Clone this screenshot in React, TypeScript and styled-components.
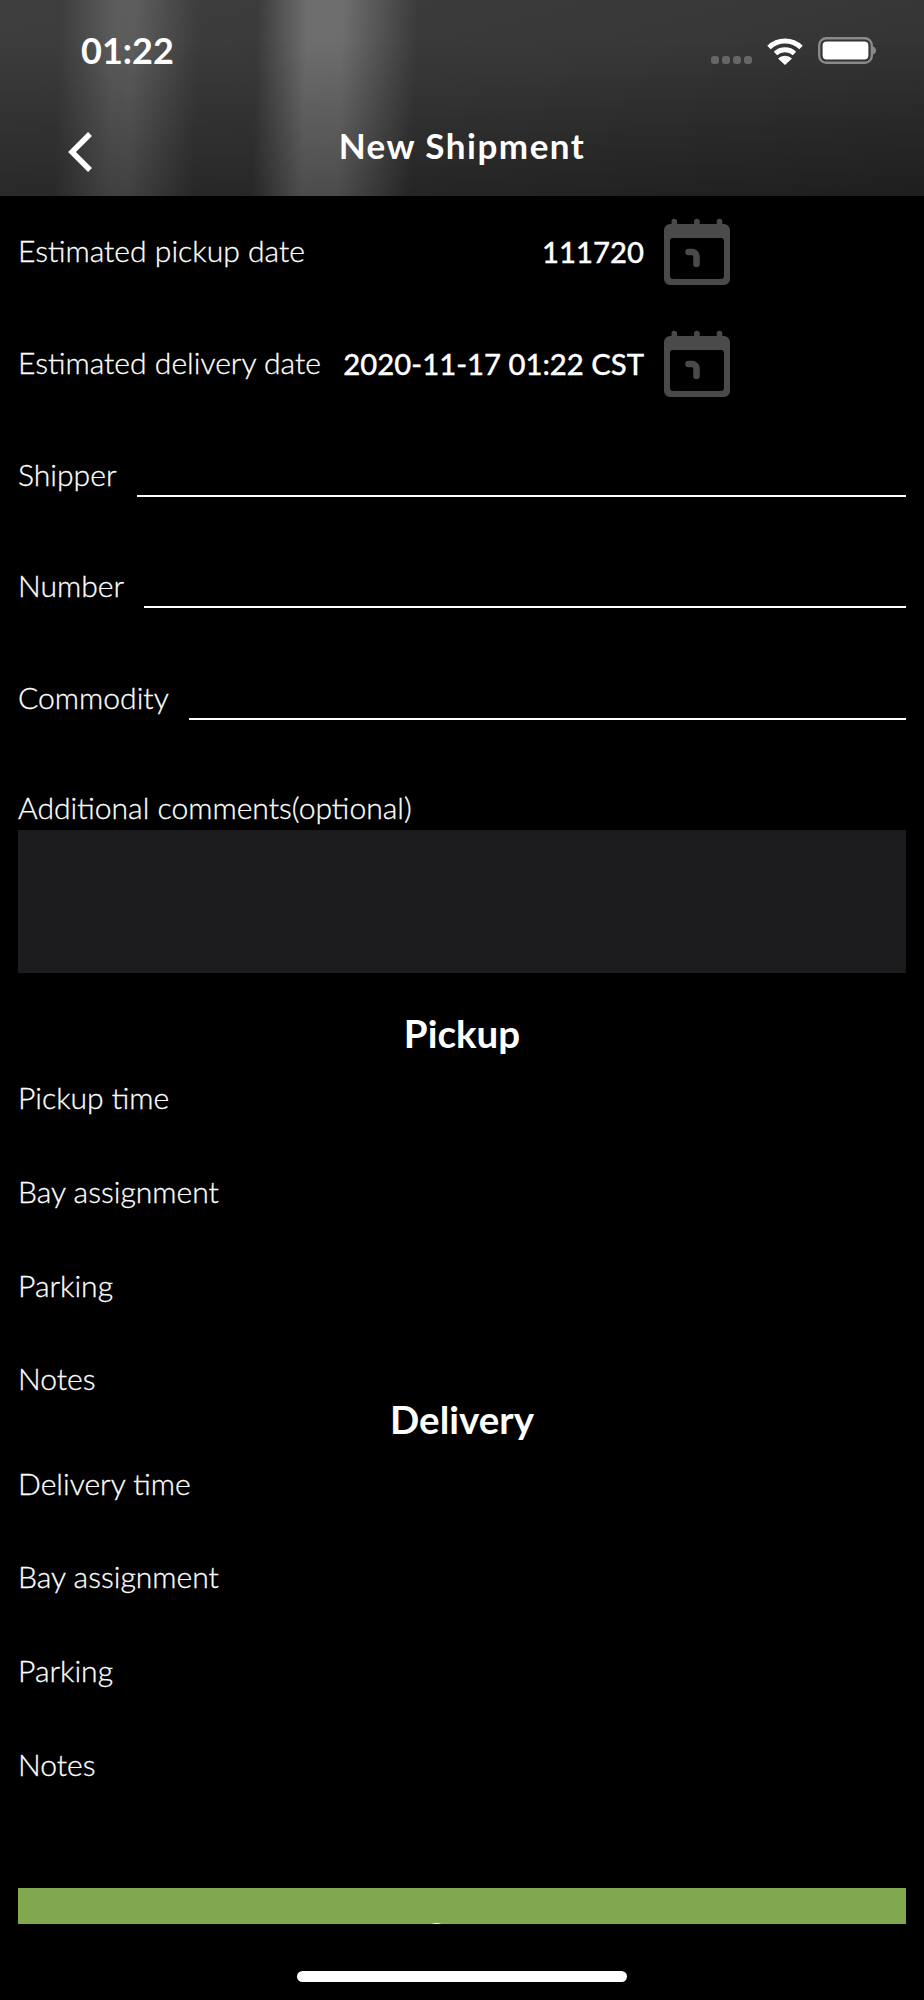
import React from "react";
import styled, { createGlobalStyle } from "styled-components";

const GlobalStyle = createGlobalStyle`
  html, body {
    margin: 0;
    padding: 0;
    background: #000;
  }
  * {
    box-sizing: border-box;
  }
`;

const Screen = styled.div`
  width: 924px;
  height: 2000px;
  background: #000;
  color: #fff;
  font-family: "Lato", "Noto Sans", sans-serif;
  display: flex;
  flex-direction: column;
  overflow: hidden;
`;

const Header = styled.header`
  height: 196px;
  flex: none;
  background:
    linear-gradient(180deg, rgba(0, 0, 0, 0) 20%, rgba(0, 0, 0, 0.28) 100%),
    linear-gradient(
      92deg,
      rgba(255, 255, 255, 0) 60px,
      rgba(255, 255, 255, 0.16) 115px,
      rgba(255, 255, 255, 0.17) 135px,
      rgba(255, 255, 255, 0) 200px,
      rgba(255, 255, 255, 0) 258px,
      rgba(255, 255, 255, 0.26) 308px,
      rgba(255, 255, 255, 0.26) 343px,
      rgba(255, 255, 255, 0) 418px
    ),
    linear-gradient(165deg, #3e3e3e 0%, #383838 50%, #2a2a2a 100%);
`;

const StatusBar = styled.div`
  height: 100px;
  padding: 28px 48px 0 81px;
  display: flex;
  align-items: flex-start;
  justify-content: space-between;
`;

const Clock = styled.div`
  font-size: 36px;
  line-height: 44px;
  font-weight: 700;
`;

const StatusIcons = styled.div`
  display: flex;
  align-items: flex-start;
  margin-top: 9px;
`;

const SignalDots = styled.div`
  display: flex;
  gap: 3px;
  margin: 19px 14px 0 0;
`;

const SignalDot = styled.span`
  width: 8px;
  height: 8px;
  border-radius: 3px;
  background: #666;
`;

const NavBar = styled.nav`
  height: 96px;
  display: grid;
  grid-template-columns: 120px 1fr 120px;
  align-items: center;
`;

const BackButton = styled.div`
  padding: 0 0 0 66px;
  margin-top: 8px;
  display: flex;
`;

const Title = styled.h1`
  margin: 0 0 6px;
  text-align: center;
  font-size: 35px;
  letter-spacing: 1.5px;
  font-weight: 700;
`;

const Content = styled.main`
  height: 1728px;
  flex: none;
  overflow: hidden;
  padding: 0 18px;
`;

const Field = styled.div`
  height: 111.7px;
  display: flex;
  align-items: center;
  gap: 20px;
  padding-bottom: 1px;
`;

const DateField = styled(Field)`
  width: 713px;
  gap: 19px;
`;

const Label = styled.span`
  font-size: 30.1px;
  font-weight: 300;
  -webkit-text-stroke: 0.3px #fff;
  line-height: 36px;
  white-space: nowrap;
`;

const FieldLabel = styled(Label)`
  margin-top: -2px;
`;

const DateValue = styled.span`
  flex: 1;
  text-align: right;
  font-size: 29.3px;
  font-weight: 500;
  -webkit-text-stroke: 0.3px #fff;
  white-space: nowrap;
`;

const InputLine = styled.div`
  flex: 1;
  height: 2px;
  background: #fff;
  margin-top: 42px;
`;

const CommentLabel = styled(Label)`
  display: block;
  padding-top: 35px;
  height: 76px;
`;

const CommentBox = styled.div`
  height: 143px;
  background: #1c1c1e;
`;

const SectionTitle = styled.h2`
  margin: 0;
  height: 52px;
  text-align: center;
  font-size: 38.5px;
  line-height: 52px;
  font-weight: 700;
`;

const Pickup = styled(SectionTitle)`
  margin-top: 34px;
`;

const InfoList = styled.div`
  display: flex;
  flex-direction: column;
  margin-top: 20px;
`;

const InfoRow = styled(Label)`
  display: block;
  height: 93.6px;
`;

const DeliveryBlock = styled.div`
  margin-top: -61px;
`;

const SaveButton = styled.button`
  display: block;
  width: 100%;
  height: 80px;
  margin-top: 49px;
  padding: 27px 0 13px;
  border: none;
  border-radius: 0;
  background: #80a84f;
  color: #fff;
  font-family: inherit;
  font-size: 34px;
  font-weight: 700;
  line-height: 40px;
`;

const HomeArea = styled.div`
  flex: 1;
  display: flex;
  justify-content: center;
  padding-top: 47px;
`;

const HomeBar = styled.div`
  width: 330px;
  height: 11px;
  border-radius: 6px;
  background: #fff;
`;

function CalendarIcon() {
  return (
    <svg width="68" height="67" viewBox="0 0 68 67" style={{ flex: "none" }}>
      <path
        fill="#4a4a4a"
        fillRule="evenodd"
        d="M7 6h1.5V3.5a2.8 2.8 0 0 1 5.6 0V6h17V3.5a2.8 2.8 0 0 1 5.6 0V6h17V3.5a2.8 2.8 0 0 1 5.6 0V6H61a6 6 0 0 1 6 6v49a6 6 0 0 1-6 6H7a6 6 0 0 1-6-6V12a6 6 0 0 1 6-6zM10 20a3 3 0 0 0-3 3v35a3 3 0 0 0 3 3h48a3 3 0 0 0 3-3V23a3 3 0 0 0-3-3z"
      />
      <path
        fill="none"
        stroke="#4a4a4a"
        strokeWidth="6.5"
        strokeLinecap="round"
        d="M25.5 34h3.5a4.5 4.5 0 0 1 4.5 4.5V46"
      />
    </svg>
  );
}

function Wifi() {
  return (
    <svg width="38" height="28" viewBox="0 0 38 28">
      <g fill="none" stroke="#fff" strokeWidth="5">
        <path d="M3 10.5a23 23 0 0 1 32 0" />
        <path d="M9.5 16.5a14 14 0 0 1 19 0" />
      </g>
      <path fill="#fff" d="M19 28l-7-6.5a10 10 0 0 1 14 0z" />
    </svg>
  );
}

function Battery() {
  return (
    <svg width="58" height="27" viewBox="0 0 58 27" style={{ marginLeft: 14 }}>
      <rect x="1.2" y="1.2" width="52.6" height="24.6" rx="7" fill="none" stroke="#8a8a8a" strokeWidth="2.4" />
      <rect x="4.6" y="4.6" width="45.8" height="17.8" rx="4" fill="#fff" />
      <path fill="#8a8a8a" d="M55 9.5c1.8.6 3 2.2 3 4s-1.2 3.4-3 4z" />
    </svg>
  );
}

function BackChevron() {
  return (
    <svg width="28" height="42" viewBox="0 0 28 42">
      <path d="M24 3L6 21l18 18" fill="none" stroke="#fff" strokeWidth="5.5" />
    </svg>
  );
}

const pickupRows = ["Pickup time", "Bay assignment", "Parking", "Notes"];
const deliveryRows = ["Delivery time", "Bay assignment", "Parking", "Notes"];

export default function App() {
  return (
    <Screen>
      <GlobalStyle />
      <Header>
        <StatusBar>
          <Clock>01:22</Clock>
          <StatusIcons>
            <SignalDots>
              <SignalDot />
              <SignalDot />
              <SignalDot />
              <SignalDot />
            </SignalDots>
            <Wifi />
            <Battery />
          </StatusIcons>
        </StatusBar>
        <NavBar>
          <BackButton>
            <BackChevron />
          </BackButton>
          <Title>New Shipment</Title>
        </NavBar>
      </Header>
      <Content>
        <DateField>
          <FieldLabel>Estimated pickup date</FieldLabel>
          <DateValue>111720</DateValue>
          <CalendarIcon />
        </DateField>
        <DateField>
          <FieldLabel>Estimated delivery date</FieldLabel>
          <DateValue>2020-11-17 01:22 CST</DateValue>
          <CalendarIcon />
        </DateField>
        <Field>
          <FieldLabel>Shipper</FieldLabel>
          <InputLine />
        </Field>
        <Field>
          <FieldLabel>Number</FieldLabel>
          <InputLine />
        </Field>
        <Field>
          <FieldLabel>Commodity</FieldLabel>
          <InputLine />
        </Field>
        <CommentLabel>Additional comments(optional)</CommentLabel>
        <CommentBox />
        <Pickup>Pickup</Pickup>
        <InfoList>
          {pickupRows.map((row) => (
            <InfoRow key={row}>{row}</InfoRow>
          ))}
        </InfoList>
        <DeliveryBlock>
          <SectionTitle>Delivery</SectionTitle>
          <InfoList>
            {deliveryRows.map((row) => (
              <InfoRow key={row}>{row}</InfoRow>
            ))}
          </InfoList>
        </DeliveryBlock>
        <SaveButton>Save</SaveButton>
      </Content>
      <HomeArea>
        <HomeBar />
      </HomeArea>
    </Screen>
  );
}
